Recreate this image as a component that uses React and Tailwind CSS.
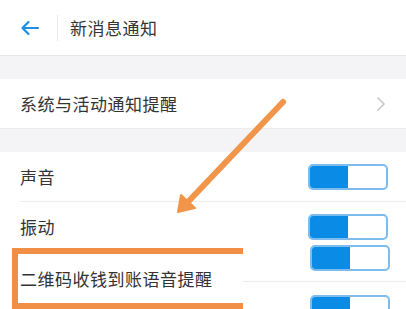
import React from "react";

function Toggle() {
  return (
    <div className="flex h-[26px] w-[80px] overflow-hidden rounded-[5px] border-2 border-[#7dbcef] bg-white">
      <div className="h-full w-[38px] bg-[#0a8ce6]" />
    </div>
  );
}

export default function App() {
  const font = { fontFamily: '"Noto Sans CJK SC", "Noto Sans", sans-serif' };
  return (
    <div className="relative h-[309px] w-[406px] overflow-hidden bg-white text-[#333] tracking-[0.5px]" style={font}>
      {/* header */}
      <div className="flex h-[55px] items-center">
        <div className="flex w-[57px] justify-center pl-[2px]">
          <svg width="20" height="16" viewBox="0 0 20 16" fill="none" stroke="#1f8fe5" strokeWidth="2.2" strokeLinecap="round" strokeLinejoin="round">
            <path d="M18 8H2.5M8.5 2L2.5 8l6 6" />
          </svg>
        </div>
        <div className="h-[26px] w-px bg-[#e8e8e8]" />
        <div className="pl-[12px] text-[17px] leading-none">新消息通知</div>
      </div>
      <div className="h-[24px] border-t border-[#e6e5e8] bg-[#f4f3f6]" />
      {/* row 1 */}
      <div className="flex h-[49px] items-center justify-between pl-[20px] pr-[20px]">
        <span className="text-[17px] leading-none">系统与活动通知提醒</span>
        <svg width="10" height="16" viewBox="0 0 10 16" fill="none" stroke="#c8c8c8" strokeWidth="1.6">
          <path d="M1.5 1.5L8 8l-6.5 6.5" />
        </svg>
      </div>
      <div className="h-[24px] border-t border-[#ecebee] bg-[#f4f3f6]" />
      {/* row 声音 */}
      <div className="ml-[20px] flex h-[50px] items-center justify-between border-b border-[#ececec] pr-[18px]">
        <span className="text-[17px] leading-none">声音</span>
        <Toggle />
      </div>
      {/* row 振动 */}
      <div className="ml-[20px] flex h-[43px] items-start justify-between pr-[18px] pt-[12px]">
        <span className="mt-[4px] text-[17px] leading-none">振动</span>
        <Toggle />
      </div>
      {/* pasted row */}
      <div className="ml-[243px] flex h-[37px] items-start justify-end border-b border-[#ececec] pr-[16px]">
        <Toggle />
      </div>
      <div className="ml-[243px] flex h-[27px] items-start justify-end pr-[16px] pt-[13px]">
        <Toggle />
      </div>

      {/* annotation box */}
      <div className="absolute left-[12px] top-[248px] flex h-[61px] w-[231px] items-center border-y-[6px] border-l-[6px] border-[#f08f45] bg-white pl-[2px]">
        <span className="text-[17px] leading-none">二维码收钱到账语音提醒</span>
      </div>

      {/* annotation arrow */}
      <svg className="absolute left-0 top-0" width="406" height="309" viewBox="0 0 406 309" fill="none">
        <path d="M283 102L186 204" stroke="#f0954a" strokeWidth="6" strokeLinecap="round" />
        <path d="M178 212L181 195L195 208Z" fill="#f0954a" stroke="#f0954a" strokeWidth="2" strokeLinejoin="round" />
      </svg>
    </div>
  );
}
